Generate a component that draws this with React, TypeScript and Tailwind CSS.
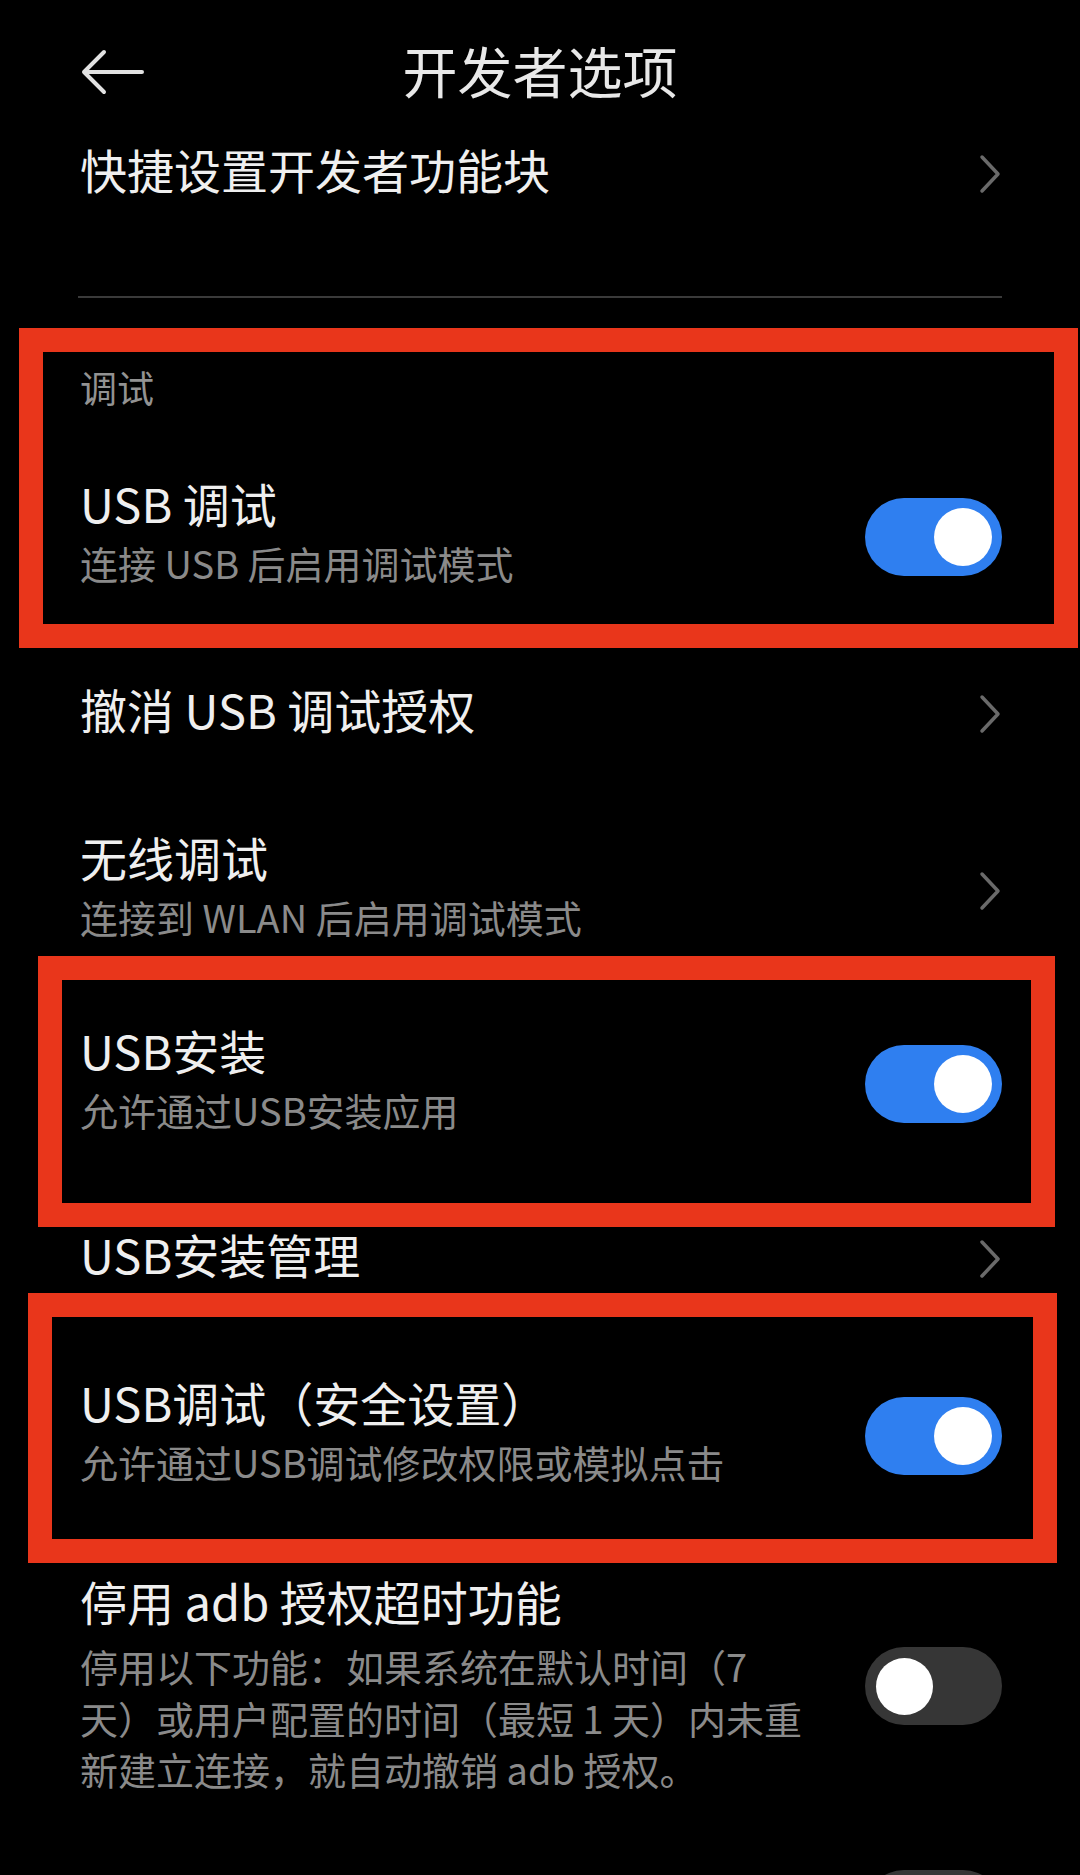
import React from 'react';

// 开发者选项 页面（带红框标注）

function Chevron() {
  return (
    <svg width="24" height="40" viewBox="0 0 24 40" className="shrink-0">
      <polyline
        points="4,3 20,20 4,37"
        fill="none"
        stroke="#6a6a6a"
        strokeWidth="3.5"
        strokeLinecap="round"
        strokeLinejoin="round"
      />
    </svg>
  );
}

function Toggle({ on }: { on: boolean }) {
  return on ? (
    <div className="flex h-[78px] w-[137px] shrink-0 items-center justify-end rounded-full bg-[#2f7ff0] pr-[10px]">
      <div className="h-[58px] w-[58px] rounded-full bg-white" />
    </div>
  ) : (
    <div className="flex h-[78px] w-[137px] shrink-0 items-center justify-start rounded-full bg-[#363636] pl-[11px]">
      <div className="h-[57px] w-[57px] rounded-full bg-white" />
    </div>
  );
}

type RowProps = {
  title: string;
  subtitle?: string | string[];
  right: 'chevron' | 'on' | 'off';
  className?: string;
};

function Row({ title, subtitle, right, className = '' }: RowProps) {
  const lines = typeof subtitle === 'string' ? [subtitle] : subtitle;
  const multi = !!lines && lines.length > 1;
  return (
    <div className={`flex items-center pl-[80px] pr-[78px] ${className}`}>
      <div className="min-w-0 flex-1">
        <div className="pb-[10px] text-[47px] leading-[46px] text-[#efefef] whitespace-nowrap">{title}</div>
        {lines && (
          <div className={`mt-[6px] text-[38px] text-[#8a8a8a] ${multi ? '' : 'pb-[10px]'}`}>
            {lines.map((l, i) => (
              <div key={i} className={`whitespace-nowrap ${multi ? 'leading-[51.5px]' : 'leading-[42px]'}`}>
                {l}
              </div>
            ))}
          </div>
        )}
      </div>
      {right === 'chevron' ? <Chevron /> : <Toggle on={right === 'on'} />}
    </div>
  );
}

// 红色标注框，覆盖在内容上
function Mark({ left, right }: { left: string; right: string }) {
  return (
    <div
      className={`pointer-events-none absolute top-0 bottom-0 border-[24px] border-[#e9361b] ${left} ${right}`}
    />
  );
}

export default function App() {
  return (
    <div className="h-[1875px] w-[1080px] overflow-hidden bg-black font-['Noto_Sans_CJK_SC',sans-serif]">
      {/* 顶部标题栏 */}
      <header className="grid h-[144px] grid-cols-[1fr_auto_1fr] items-center">
        <div className="pl-[80px]">
          <svg width="64" height="46" viewBox="0 0 64 46">
            <path
              d="M4 23 H62 M24 3 L4 23 L24 43"
              fill="none"
              stroke="#e2e2e2"
              strokeWidth="4"
              strokeLinecap="round"
              strokeLinejoin="round"
            />
          </svg>
        </div>
        <h1 className="pb-[6px] text-[55px] leading-[58px] font-normal text-[#e8e8e8]">开发者选项</h1>
        <div />
      </header>

      <Row title="快捷设置开发者功能块" right="chevron" className="h-[60px]" />

      <div className="mt-[92px] ml-[78px] h-[2px] w-[924px] bg-[#3a3a3a]" />

      {/* 调试 */}
      <section className="relative mt-[30px] h-[320px]">
        <div className="pt-[37px] pl-[80px] text-[37px] leading-[44px] text-[#929292]">调试</div>
        <Row title="USB 调试" subtitle="连接 USB 后启用调试模式" right="on" className="mt-[71px]" />
        <Mark left="left-[19px]" right="right-[2px]" />
      </section>

      <Row title="撤消 USB 调试授权" right="chevron" className="mt-[38px]" />

      <Row title="无线调试" subtitle="连接到 WLAN 后启用调试模式" right="chevron" className="mt-[92px]" />

      <section className="relative mt-[8px] h-[271px]">
        <Row title="USB安装" subtitle="允许通过USB安装应用" right="on" className="pt-[71px]" />
        <Mark left="left-[38px]" right="right-[25px]" />
      </section>

      <Row title="USB安装管理" right="chevron" className="mt-[4px]" />

      <section className="relative mt-[6px] h-[270px]">
        <Row
          title="USB调试（安全设置）"
          subtitle="允许通过USB调试修改权限或模拟点击"
          right="on"
          className="pt-[86px]"
        />
        <Mark left="left-[28px]" right="right-[23px]" />
      </section>

      <Row
        title="停用 adb 授权超时功能"
        subtitle={[
          '停用以下功能：如果系统在默认时间（7',
          '天）或用户配置的时间（最短 1 天）内未重',
          '新建立连接，就自动撤销 adb 授权。',
        ]}
        right="off"
        className="mt-[15px]"
      />

      <div className="mt-[75px] flex justify-end pr-[78px]">
        <Toggle on={false} />
      </div>
    </div>
  );
}
